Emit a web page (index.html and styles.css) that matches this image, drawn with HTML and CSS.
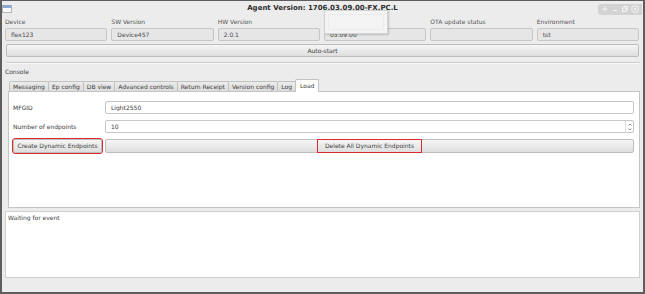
FILE: index.html
```html
<!DOCTYPE html>
<html lang="en">
  <head>
    <meta charset="UTF-8" />
    <meta name="viewport" content="width=device-width, initial-scale=1.0" />
    <title>Agent</title>
    <link rel="stylesheet" href="styles.css">
  </head>
  <body>
    <div class="window">
      <header class="titlebar">
        <span class="app-icon"></span>
        <h1 class="title">Agent Version: 1706.03.09.00-FX.PC.L</h1>
        <div class="wm-controls">
          <svg viewBox="0 0 8 8" width="8" height="8"><path d="M4 1.5 V6.5 M1.5 4 H6.5" /></svg>
          <svg viewBox="0 0 8 8" width="8" height="8"><path d="M2 5.5 H6" /></svg>
          <svg viewBox="0 0 8 8" width="8" height="8"><rect x="1.5" y="3" width="3.5" height="3.5" /><path d="M3 3 V1.5 H6.5 V5 H5" /></svg>
          <svg viewBox="0 0 8 8" width="8" height="8"><rect x="1" y="1" width="6" height="6" rx="1" /><path d="M2.8 2.8 L5.2 5.2 M5.2 2.8 L2.8 5.2" /></svg>
        </div>
      </header>

      <div class="fields">
        <div class="field">
          <span class="field__label">Device</span>
          <div class="field__box">flex123</div>
        </div>
        <div class="field">
          <span class="field__label">SW Version</span>
          <div class="field__box">Device457</div>
        </div>
        <div class="field">
          <span class="field__label">HW Version</span>
          <div class="field__box">2.0.1</div>
        </div>
        <div class="field">
          <span class="field__label">FW Version</span>
          <div class="field__box">03.09.00</div>
        </div>
        <div class="field">
          <span class="field__label">OTA update status</span>
          <div class="field__box"></div>
        </div>
        <div class="field">
          <span class="field__label">Environment</span>
          <div class="field__box">tst</div>
        </div>
      </div>

      <button class="btn btn--wide" type="button">Auto-start</button>
      <div class="separator"></div>

      <section class="console">
        <div class="console__label">Console</div>
        <nav class="tabs">
          <span class="tab">Messaging</span>
          <span class="tab">Ep config</span>
          <span class="tab">DB view</span>
          <span class="tab">Advanced controls</span>
          <span class="tab">Return Receipt</span>
          <span class="tab">Version config</span>
          <span class="tab">Log</span>
          <span class="tab tab--active">Load</span>
        </nav>
        <div class="tab-panel">
          <div class="form-label">MFGID</div>
          <input class="text-input" type="text" value="Light2550" />

          <div class="form-label">Number of endpoints</div>
          <div class="spin">
            <input class="text-input" type="text" value="10" />
            <span class="spin__arrows">
              <svg viewBox="0 0 6 10" width="6" height="10"><path d="M1.5 3.5 L3 2 L4.5 3.5 M1.5 6.5 L3 8 L4.5 6.5" /></svg>
            </span>
          </div>

          <button class="btn btn--marked" type="button">Create Dynamic Endpoints</button>
          <button class="btn" type="button"><span class="mark">Delete All Dynamic Endpoints</span></button>
        </div>
      </section>

      <div class="log">Waiting for event</div>

      <!-- tooltip that covers the fourth field -->
      <div class="popup"><div class="popup__inner"></div></div>
    </div>
  </body>
</html>
```

FILE: styles.css
```css
* {
  border: 0;
  box-sizing: border-box;
  margin: 0;
  padding: 0;
}
:root {
  --win: #ececec;
  --line: #c6c6c6;
  --text: #3d3d3d;
  --mark: #dc2a2e;
}
body {
  width: 645px;
  height: 294px;
  overflow: hidden;
  background: #5e5e5e;
  font: 6px/1 "DejaVu Sans", sans-serif;
  color: var(--text);
}
button,
input {
  font: inherit;
  color: inherit;
}
.window {
  position: relative;
  height: 294px;
  display: flex;
  flex-direction: column;
  background: var(--win);
  border: 1px solid #5e5e5e;
  border-width: 1px 2px 2px 2px;
}

/* title bar */
.titlebar {
  height: 14px;
  display: grid;
  grid-template-columns: 1fr auto 1fr;
  align-items: center;
}
.app-icon {
  width: 10px;
  height: 8px;
  margin-top: 2px;
  border: 1px solid #b5b5b5;
  border-top: 3px solid #8ea8cf;
  background: #fafafa;
}
.title {
  font-size: 7px;
  font-weight: bold;
  color: #2e2e2e;
}
.wm-controls {
  justify-self: end;
  display: flex;
  gap: 2px;
  align-items: center;
  height: 11px;
  margin: 2px 1px 0 0;
  padding: 0 3px;
  background: #d3d3d3;
  border-radius: 3px 0 0 3px;
}
.wm-controls svg {
  fill: none;
  stroke: #f4f4f4;
  stroke-width: 1;
}

/* info fields */
.fields {
  display: grid;
  grid-template-columns: repeat(6, 1fr);
  gap: 4px;
  padding: 2px 4px 0 3px;
}
.field__label {
  display: block;
  height: 10px;
  line-height: 10px;
  margin-bottom: 1px;
  color: #555;
}
.field__box {
  height: 13px;
  line-height: 11px;
  padding-left: 5px;
  background: #e6e6e6;
  border: 1px solid var(--line);
  border-radius: 2px;
  color: #4a4a4a;
}

/* buttons */
.btn {
  height: 14px;
  background: linear-gradient(#f6f6f6, #dedede);
  border: 1px solid #bdbdbd;
  border-radius: 2px;
  text-align: center;
  -webkit-appearance: none;
  appearance: none;
}
.btn--wide {
  height: 13px;
  margin: 3px 4px 0 4px;
}
.btn--marked {
  outline: 1.5px solid var(--mark);
  outline-offset: 0;
}
.mark {
  display: inline-block;
  padding: 3px 7px;
  outline: 1.5px solid var(--mark);
}
.separator {
  margin: 5px 3px 0 4px;
  border-top: 1px solid #cdcdcd;
  border-bottom: 1px solid #f8f8f8;
}

/* console group */
.console {
  padding: 0 3px 0 6px;
}
.console__label {
  height: 10px;
  line-height: 10px;
  margin: 3px 0 2px -3px;
}
.tabs {
  display: flex;
  align-items: flex-end;
  height: 12px;
  padding-left: 1px;
  position: relative;
  z-index: 1;
}
.tab {
  height: 10px;
  line-height: 9px;
  padding: 0 3px;
  margin-right: -1px;
  background: linear-gradient(#ececec, #dcdcdc);
  border: 1px solid #c2c2c2;
  border-bottom: 0;
  border-radius: 2px 2px 0 0;
}
.tab--active {
  height: 13px;
  line-height: 11px;
  padding: 0 4px;
  background: #fff;
  margin-bottom: -1px;
}
.tab-panel {
  height: 117px;
  background: #fff;
  border: 1px solid #c4c4c4;
  display: grid;
  grid-template-columns: 89px 1fr;
  grid-template-rows: 13px 13px 14px;
  gap: 6px 3px;
  align-content: start;
  align-items: center;
  padding: 9px 5px 0 4px;
}
.form-label {
  line-height: 13px;
  color: #3a3a3a;
}
.text-input {
  height: 13px;
  width: 100%;
  padding-left: 5px;
  background: #fff;
  border: 1px solid var(--line);
  border-radius: 2px;
  outline: none;
}
.spin {
  position: relative;
  height: 13px;
}
.spin__arrows {
  position: absolute;
  right: 1px;
  top: 1px;
  width: 8px;
  height: 11px;
  border-left: 1px solid #e0e0e0;
  display: flex;
  align-items: center;
  justify-content: center;
}
.spin__arrows svg {
  fill: none;
  stroke: #777;
  stroke-width: 0.8;
}

/* output area */
.log {
  height: 67px;
  margin: 3px 3px 0 3px;
  padding: 3px 2px;
  background: #fff;
  border: 1px solid #cfcfcf;
  color: #444;
}

.popup {
  position: absolute;
  left: 322px;
  top: 9px;
  width: 64px;
  height: 24px;
  padding: 3px;
  background: #f4f4f4;
  border: 1px solid #d2d2d2;
  box-shadow: 1px 1px 2px rgba(0, 0, 0, 0.18);
  z-index: 2;
}
.popup__inner {
  height: 100%;
  border: 1px solid #ebebeb;
}
```
